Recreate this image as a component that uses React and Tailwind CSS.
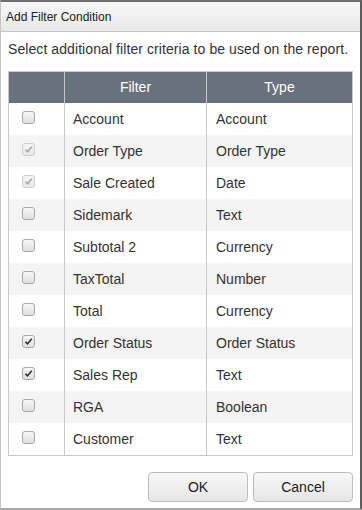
import React from "react";

const rows = [
  { name: "Account", type: "Account", state: "off" },
  { name: "Order Type", type: "Order Type", state: "disabled" },
  { name: "Sale Created", type: "Date", state: "disabled" },
  { name: "Sidemark", type: "Text", state: "off" },
  { name: "Subtotal 2", type: "Currency", state: "off" },
  { name: "TaxTotal", type: "Number", state: "off" },
  { name: "Total", type: "Currency", state: "off" },
  { name: "Order Status", type: "Order Status", state: "on" },
  { name: "Sales Rep", type: "Text", state: "on" },
  { name: "RGA", type: "Boolean", state: "off" },
  { name: "Customer", type: "Text", state: "off" },
];

function Check({ state }) {
  const checked = state !== "off";
  const disabled = state === "disabled";
  return (
    <span
      className={
        "relative flex h-[13px] w-[13px] items-center justify-center rounded-[3px] border " +
        (disabled
          ? "border-[#cfcfcf] bg-gradient-to-b from-[#f4f4f4] to-[#e8e8e8]"
          : "border-[#a9a9a9] bg-gradient-to-b from-[#f6f6f6] to-[#dedede]")
      }
    >
      {checked && (
        <svg width="9" height="9" viewBox="0 0 9 9">
          <path
            d="M1.5 4.8 L3.5 6.8 L7.8 1.8"
            fill="none"
            stroke={disabled ? "#a8a8a8" : "#333"}
            strokeWidth="1.7"
          />
        </svg>
      )}
    </span>
  );
}

export default function App() {
  return (
    <div
      className="flex h-[510px] w-[362px] flex-col overflow-hidden border-t-2 border-r-2 border-b-2 border-l border-t-[#6f6f6f] border-r-[#5c5c5c] border-b-[#a8a8a8] border-l-[#c4c4c4] bg-white text-[#333]"
      style={{ fontFamily: '"Liberation Sans", Arial, sans-serif' }}
    >
      <div className="flex h-[30px] shrink-0 items-center border-b border-[#c6c6c6] bg-gradient-to-b from-[#f7f7f7] to-[#e9e9e9] pl-[5px] text-[12px] text-[#222]">
        Add Filter Condition
      </div>
      <div className="px-[7px] pt-[8px] text-[14px] leading-[18px] tracking-[0.08px]">
        Select additional filter criteria to be used on the report.
      </div>
      <div className="mx-[7px] mt-[13px] border border-[#c8c8c8]">
        <div className="grid h-[31px] grid-cols-[56px_142px_1fr] bg-[#69717f] text-[14px] text-white">
          <div className="border-r border-[#c8c8c8]" />
          <div className="flex items-center justify-center border-r border-[#c8c8c8]">Filter</div>
          <div className="flex items-center justify-center">Type</div>
        </div>
        {rows.map((r, i) => (
          <div
            key={r.name}
            className={
              "grid h-[32px] grid-cols-[56px_142px_1fr] text-[14px] " +
              (i % 2 === 1 ? "bg-[#f4f4f4]" : "bg-white")
            }
          >
            <div className="flex items-center border-r border-[#c8c8c8] pb-[4px] pl-[13px]">
              <Check state={r.state} />
            </div>
            <div className="flex items-center border-r border-[#c8c8c8] pl-[8px]">{r.name}</div>
            <div className="flex items-center pl-[9px]">{r.type}</div>
          </div>
        ))}
      </div>
      <div className="mt-[16px] flex justify-end gap-[5px] pr-[7px]">
        <button className="h-[30px] w-[100px] rounded-[4px] border border-[#bdbdbd] bg-gradient-to-b from-[#f7f7f7] to-[#e6e6e6] text-[14px] text-[#222]">
          OK
        </button>
        <button className="h-[30px] w-[100px] rounded-[4px] border border-[#bdbdbd] bg-gradient-to-b from-[#f7f7f7] to-[#e6e6e6] text-[14px] text-[#222]">
          Cancel
        </button>
      </div>
    </div>
  );
}
